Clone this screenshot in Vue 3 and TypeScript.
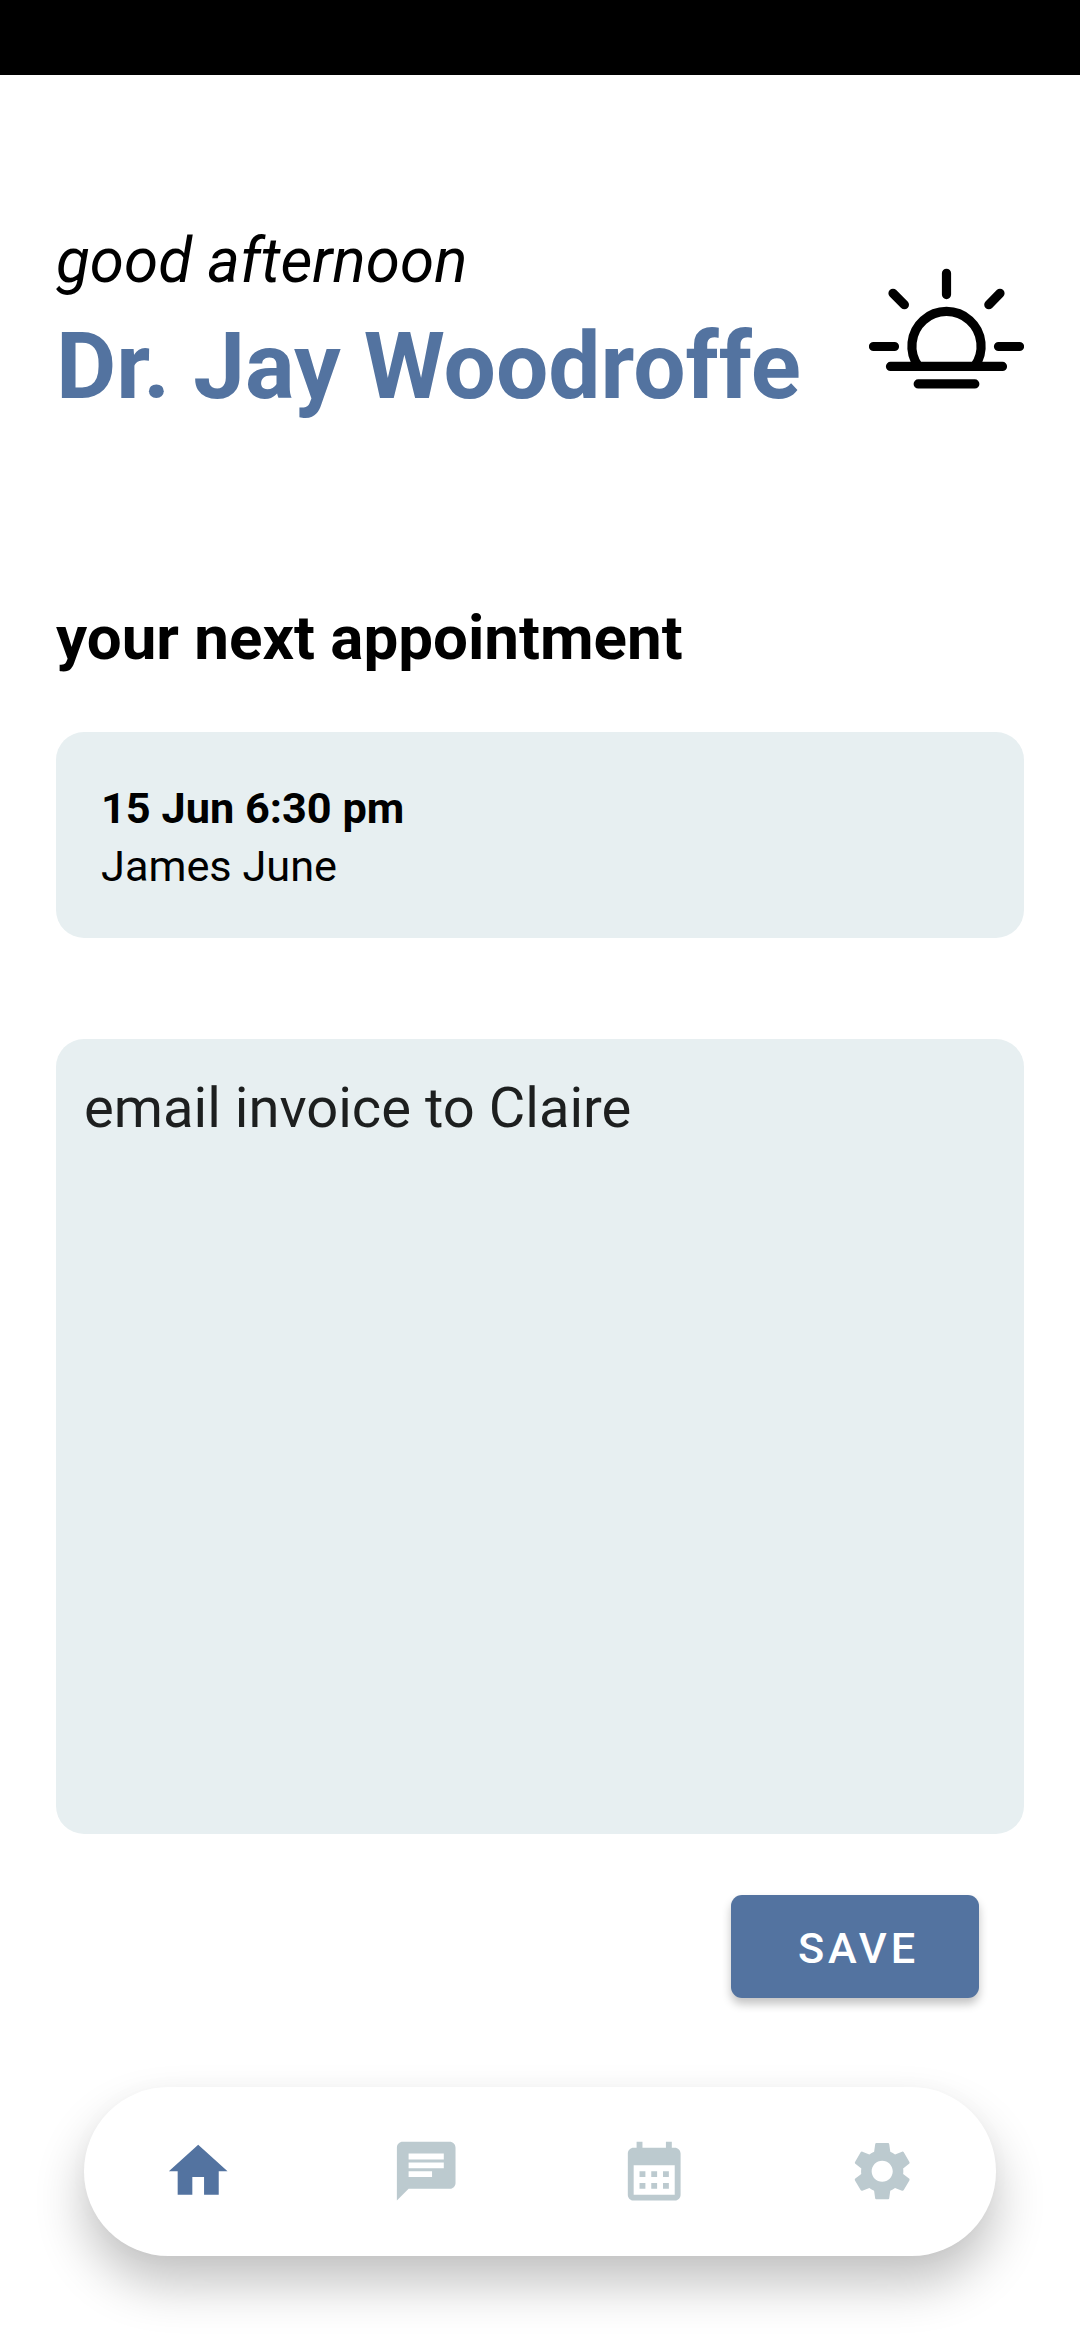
<script setup lang="ts">
import { ref } from 'vue'

interface Tab {
  id: string
  label: string
  path: string
}

const tabs: Tab[] = [
  { id: 'home', label: 'Home', path: 'M10 20v-6h4v6h5v-8h3L12 3 2 12h3v8z' },
  {
    id: 'chat',
    label: 'Messages',
    path: 'M20 2H4c-1.1 0-1.99.9-1.99 2L2 22l4-4h14c1.1 0 2-.9 2-2V4c0-1.1-.9-2-2-2zM6 9h12v2H6V9zm8 5H6v-2h8v2zm4-6H6V6h12v2z',
  },
  {
    id: 'calendar',
    label: 'Calendar',
    path: 'M19 4h-1V2h-2v2H8V2H6v2H5c-1.11 0-1.99.9-1.99 2L3 20c0 1.1.89 2 2 2h14c1.1 0 2-.9 2-2V6c0-1.1-.9-2-2-2zm0 16H5V10h14v10zM9 14H7v-2h2v2zm4 0h-2v-2h2v2zm4 0h-2v-2h2v2zm-8 4H7v-2h2v2zm4 0h-2v-2h2v2zm4 0h-2v-2h2v2z',
  },
  {
    id: 'settings',
    label: 'Settings',
    path: 'M19.14 12.94c.04-.3.06-.61.06-.94 0-.32-.02-.64-.07-.94l2.03-1.58c.18-.14.23-.41.12-.61l-1.92-3.32c-.12-.22-.37-.29-.59-.22l-2.39.96c-.5-.38-1.03-.7-1.62-.94l-.36-2.54c-.04-.24-.24-.41-.48-.41h-3.84c-.24 0-.43.17-.47.41l-.36 2.54c-.59.24-1.13.57-1.62.94l-2.39-.96c-.22-.08-.47 0-.59.22L2.74 8.87c-.12.21-.08.47.12.61l2.03 1.58c-.05.3-.09.63-.09.94s.02.64.07.94l-2.03 1.58c-.18.14-.23.41-.12.61l1.92 3.32c.12.22.37.29.59.22l2.39-.96c.5.38 1.03.7 1.62.94l.36 2.54c.05.24.24.41.48.41h3.84c.24 0 .44-.17.47-.41l.36-2.54c.59-.24 1.13-.56 1.62-.94l2.39.96c.22.08.47 0 .59-.22l1.92-3.32c.12-.22.07-.47-.12-.61l-2.01-1.58zM12 15.6c-1.98 0-3.6-1.62-3.6-3.6s1.62-3.6 3.6-3.6 3.6 1.62 3.6 3.6-1.62 3.6-3.6 3.6z',
  },
]

const activeTab = ref('home')
const note = ref('email invoice to Claire')
</script>

<template>
  <div class="screen">
    <div class="status-bar"></div>

    <header class="header">
      <div class="greeting">
        <p class="salutation">good afternoon</p>
        <h1 class="name">Dr. Jay Woodroffe</h1>
      </div>
      <svg class="sun" viewBox="869 268 155 121" aria-hidden="true">
        <path d="M918.5 366.4A34.6 34.6 0 1 1 974.5 366.4" />
        <path d="M946.5 273.3V294.6M893 293.3l11.4 11.4M1000 293.3l-11.2 11.4M873.5 346.5h21M998.5 346.5h21M890.5 366.4h112M918.2 383.9h56.6" />
      </svg>
    </header>

    <main class="content">
      <h2 class="section-title">your next appointment</h2>
      <section class="appointment">
        <p class="when">15 Jun 6:30 pm</p>
        <p class="who">James June</p>
      </section>
      <section class="note">{{ note }}</section>
      <button class="save" type="button">SAVE</button>
    </main>

    <nav class="tab-bar">
      <button
        v-for="tab in tabs"
        :key="tab.id"
        class="tab"
        :class="{ active: tab.id === activeTab }"
        type="button"
        :aria-label="tab.label"
        @click="activeTab = tab.id"
      >
        <svg class="tab-icon" viewBox="0 0 24 24"><path :d="tab.path" /></svg>
      </button>
    </nav>
  </div>
</template>

<style>
body {
  margin: 0;
  background: #fff;
}
</style>

<style scoped>
.screen {
  width: 1080px;
  height: 2340px;
  overflow: hidden;
  display: flex;
  flex-direction: column;
  background: #fff;
  font-family: Roboto, 'Liberation Sans', sans-serif;
  color: #000;
}

p,
h1,
h2 {
  margin: 0;
}

.status-bar {
  flex: none;
  height: 75px;
  background: #000;
}

.header {
  flex: none;
  display: flex;
  justify-content: space-between;
  align-items: flex-start;
  height: 345px;
  padding: 150px 56px 0;
  box-sizing: content-box;
}

.salutation {
  font-size: 61.9px;
  line-height: 73px;
  font-style: italic;
}

.name {
  margin-top: 14px;
  font-size: 92.8px;
  line-height: 109px;
  font-weight: 700;
  color: #5373a0;
  white-space: nowrap;
  font-variant-ligatures: none;
}

.sun {
  flex: none;
  width: 155px;
  height: 121px;
  margin-top: 43px;
  fill: none;
  stroke: #000;
  stroke-width: 9.2;
  stroke-linecap: round;
}

.content {
  flex: none;
  display: flex;
  flex-direction: column;
  padding: 32px 56px 0;
}

.section-title {
  font-size: 61.9px;
  line-height: 73px;
  font-weight: 700;
}

.appointment {
  height: 206px;
  margin-top: 57px;
  padding: 48px 45px 0;
  box-sizing: border-box;
  border-radius: 28px;
  background: #e7eff1;
}

.when,
.who {
  font-size: 43.3px;
  line-height: 58px;
}

.when {
  font-weight: 700;
}

.note {
  height: 795px;
  margin-top: 101px;
  padding: 36px 28px 0;
  box-sizing: border-box;
  border-radius: 28px;
  background: #e7eff1;
  color: #1d1f1f;
  font-size: 56.15px;
  line-height: 66px;
}

.save {
  align-self: flex-end;
  width: 248px;
  height: 103px;
  margin: 61px 45px 0 0;
  padding: 4px 0 0 7px;
  border: 0;
  border-radius: 11px;
  background: #5373a0;
  box-shadow: 0 6px 10px rgba(0, 0, 0, 0.24);
  color: #fff;
  font: 500 43.3px/1 Roboto, 'Liberation Sans', sans-serif;
  letter-spacing: 3.87px;
}

.tab-bar {
  flex: none;
  display: flex;
  height: 169px;
  margin: 89px 84px 0;
  border-radius: 84.5px;
  background: #fff;
  box-shadow: 0 28px 50px rgba(0, 0, 0, 0.24), 0 0 24px rgba(0, 0, 0, 0.02);
}

.tab {
  flex: 1;
  display: flex;
  align-items: center;
  justify-content: center;
  padding: 0;
  border: 0;
  background: none;
}

.tab-icon {
  width: 70.4px;
  height: 70.4px;
  fill: #bccacf;
}

.tab.active .tab-icon {
  fill: #5373a0;
}
</style>
